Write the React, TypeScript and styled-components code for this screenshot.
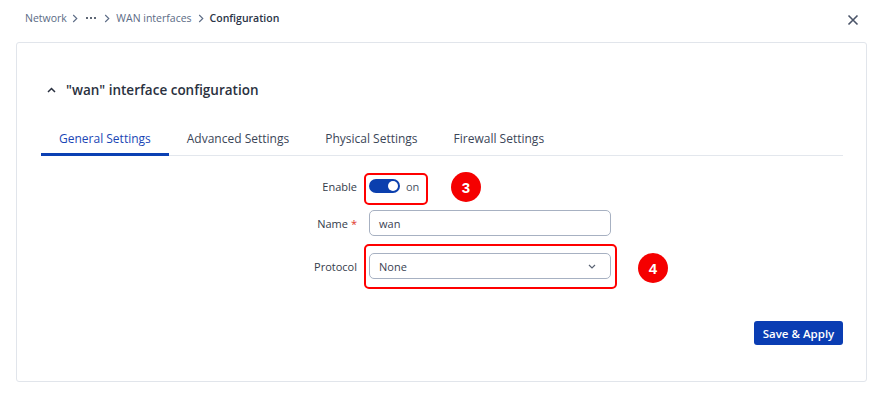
import React from "react";
import styled, { createGlobalStyle } from "styled-components";

const Global = createGlobalStyle`
  html, body { margin: 0; padding: 0; background: #ffffff; }
  body { font-family: "Open Sans", "Noto Sans", Arial, sans-serif; color: #2d3748; }
  * { box-sizing: border-box; }
`;

const Page = styled.div`
  width: 884px;
  height: 398px;
  display: flex;
  flex-direction: column;
  padding: 0 17px 16px 16px;
`;

const TopBar = styled.div`
  height: 42px;
  display: flex;
  align-items: center;
  justify-content: space-between;
  padding: 0 8px 2px 9px;
`;

const Crumbs = styled.nav`
  display: flex;
  align-items: center;
  font-size: 10.5px;
  color: #5b6b85;
  margin-top: -4px;
`;

const Crumb = styled.span<{ $current?: boolean }>`
  color: ${(p) => (p.$current ? "#2a3447" : "#5b6b85")};
  font-weight: ${(p) => (p.$current ? 600 : 400)};
`;

const Sep = styled.svg<{ $l: number; $r: number }>`
  width: 6px;
  height: 9px;
  margin: 0 ${(p) => p.$r}px 0 ${(p) => p.$l}px;
`;

const Dots = styled.span`
  display: inline-flex;
  gap: 1.5px;
  & > i {
    width: 2.5px;
    height: 2.5px;
    background: #2a3447;
    border-radius: 50%;
    display: block;
  }
`;

const CloseBtn = styled.button`
  background: none;
  border: 0;
  padding: 0;
  width: 12px;
  height: 12px;
  display: flex;
`;

const Card = styled.section`
  flex: 1;
  border: 1px solid #e1e5eb;
  border-radius: 3px;
  padding: 36px 23px 36px 24px;
  display: flex;
  flex-direction: column;
`;

const Heading = styled.h2`
  margin: 0 0 0 6px;
  display: flex;
  align-items: center;
  gap: 10px;
  font-size: 13.5px;
  font-weight: 600;
  color: #2a3140;
  height: 22px;
`;

const Tabs = styled.div`
  margin-top: 29px;
  display: flex;
  border-bottom: 1px solid #e3e7ed;
`;

const Tab = styled.div<{ $active?: boolean }>`
  padding: 0 18px 6px;
  font-size: 12px;
  line-height: 17px;
  color: ${(p) => (p.$active ? "#1a46b5" : "#3b4658")};
  border-bottom: 3px solid ${(p) => (p.$active ? "#0b40b3" : "transparent")};
  margin-bottom: -1px;
  white-space: nowrap;
`;

const Form = styled.div`
  display: grid;
  grid-template-columns: 316px 242px;
  column-gap: 12px;
  align-items: center;
  margin-top: 17px;
`;

const Label = styled.label<{ $mt?: number }>`
  justify-self: end;
  font-size: 11px;
  color: #343c4a;
  margin-top: ${(p) => p.$mt ?? 0}px;
`;

const Req = styled.span`
  color: #e0352b;
  margin-left: 3px;
`;

const Control = styled.div<{ $mt?: number; $h: number }>`
  position: relative;
  height: ${(p) => p.$h}px;
  margin-top: ${(p) => p.$mt ?? 0}px;
  display: flex;
  align-items: center;
`;

const Switch = styled.span`
  width: 31px;
  height: 14px;
  border-radius: 7px;
  background: #0b3fae;
  position: relative;
  display: inline-block;
  &::after {
    content: "";
    position: absolute;
    right: 2px;
    top: 2px;
    width: 10px;
    height: 10px;
    border-radius: 50%;
    background: #ffffff;
  }
`;

const SwitchText = styled.span`
  font-size: 11px;
  color: #4a5363;
  margin-left: 6px;
`;

const Field = styled.div`
  width: 242px;
  height: 26px;
  border: 1px solid #a7b1c2;
  border-radius: 5px;
  display: flex;
  align-items: center;
  justify-content: space-between;
  padding: 0 14px 0 9px;
  font-size: 11px;
  color: #3a4252;
`;

const Highlight = styled.div<{ $l: number; $t: number; $w: number; $h: number }>`
  position: absolute;
  left: ${(p) => p.$l}px;
  top: ${(p) => p.$t}px;
  width: ${(p) => p.$w}px;
  height: ${(p) => p.$h}px;
  border: 2.5px solid #ff0000;
  border-radius: 5px;
  pointer-events: none;
`;

const Badge = styled.div<{ $l: number; $t: number }>`
  position: absolute;
  left: ${(p) => p.$l}px;
  top: ${(p) => p.$t}px;
  width: 30px;
  height: 30px;
  border-radius: 50%;
  background: #f50000;
  color: #ffffff;
  font-family: "Liberation Sans", Arial, sans-serif;
  font-weight: 700;
  font-size: 15px;
  display: flex;
  align-items: center;
  justify-content: center;
`;

const Footer = styled.div`
  margin-top: auto;
  display: flex;
  justify-content: flex-end;
`;

const SaveBtn = styled.button`
  width: 89px;
  height: 24px;
  border: 0;
  border-radius: 3px;
  background: #0a3db3;
  color: #ffffff;
  font-family: "Open Sans", "Noto Sans", Arial, sans-serif;
  font-size: 11.5px;
  font-weight: 600;
  padding: 0;
`;

const Chevron = ({ l, r }: { l: number; r: number }) => (
  <Sep $l={l} $r={r} viewBox="0 0 6 9">
    <path d="M1.2 1 L4.8 4.5 L1.2 8" fill="none" stroke="#5b6b85" strokeWidth="1.1" />
  </Sep>
);

export default function App() {
  return (
    <>
      <Global />
      <Page>
        <TopBar>
          <Crumbs>
            <Crumb>Network</Crumb>
            <Chevron l={5} r={8} />
            <Dots>
              <i />
              <i />
              <i />
            </Dots>
            <Chevron l={8} r={6} />
            <Crumb>WAN interfaces</Crumb>
            <Chevron l={6} r={6} />
            <Crumb $current>Configuration</Crumb>
          </Crumbs>
          <CloseBtn aria-label="Close">
            <svg width="12" height="12" viewBox="0 0 12 12">
              <path d="M1.5 1.5 L10.5 10.5 M10.5 1.5 L1.5 10.5" stroke="#4a5468" strokeWidth="1.6" />
            </svg>
          </CloseBtn>
        </TopBar>
        <Card>
          <Heading>
            <svg width="9" height="6" viewBox="0 0 9 6">
              <path d="M1 5 L4.5 1.5 L8 5" fill="none" stroke="#2a3140" strokeWidth="1.5" />
            </svg>
            "wan" interface configuration
          </Heading>
          <Tabs>
            <Tab $active>General Settings</Tab>
            <Tab>Advanced Settings</Tab>
            <Tab>Physical Settings</Tab>
            <Tab>Firewall Settings</Tab>
          </Tabs>
          <Form>
            <Label>Enable</Label>
            <Control $h={26}>
              <Switch />
              <SwitchText>on</SwitchText>
              <Highlight $l={-5} $t={0} $w={64} $h={32} />
              <Badge $l={82} $t={-1}>3</Badge>
            </Control>
            <Label $mt={11}>
              Name<Req>*</Req>
            </Label>
            <Control $h={26} $mt={11}>
              <Field>wan</Field>
            </Control>
            <Label $mt={17}>Protocol</Label>
            <Control $h={26} $mt={17}>
              <Field>
                None
                <svg width="8" height="5" viewBox="0 0 8 5">
                  <path d="M1 1 L4 4 L7 1" fill="none" stroke="#5a6373" strokeWidth="1.2" />
                </svg>
              </Field>
              <Highlight $l={-5} $t={-9} $w={253} $h={45} />
              <Badge $l={269} $t={0}>4</Badge>
            </Control>
          </Form>
          <Footer>
            <SaveBtn>Save &amp; Apply</SaveBtn>
          </Footer>
        </Card>
      </Page>
    </>
  );
}
